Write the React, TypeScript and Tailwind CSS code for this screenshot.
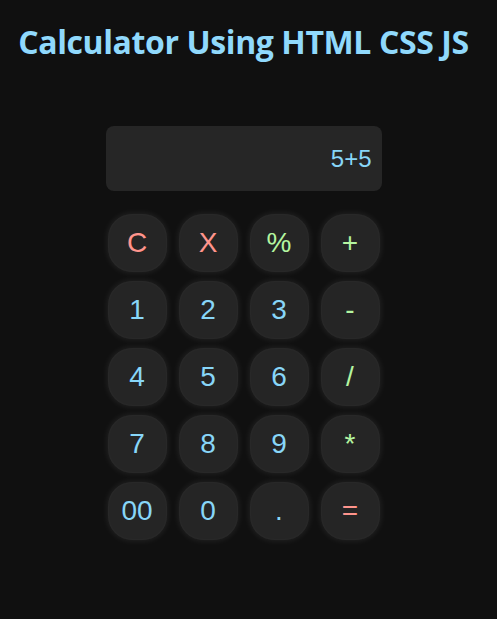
const keys = [
  { label: 'C', tone: 'text-[#ff948c]' },
  { label: 'X', tone: 'text-[#ff948c]' },
  { label: '%', tone: 'text-[#b4f5a0]' },
  { label: '+', tone: 'text-[#b4f5a0]' },
  { label: '1', tone: 'text-[#88d6f8]' },
  { label: '2', tone: 'text-[#88d6f8]' },
  { label: '3', tone: 'text-[#88d6f8]' },
  { label: '-', tone: 'text-[#b4f5a0]' },
  { label: '4', tone: 'text-[#88d6f8]' },
  { label: '5', tone: 'text-[#88d6f8]' },
  { label: '6', tone: 'text-[#88d6f8]' },
  { label: '/', tone: 'text-[#b4f5a0]' },
  { label: '7', tone: 'text-[#88d6f8]' },
  { label: '8', tone: 'text-[#88d6f8]' },
  { label: '9', tone: 'text-[#88d6f8]' },
  { label: '*', tone: 'text-[#b4f5a0]' },
  { label: '00', tone: 'text-[#88d6f8]' },
  { label: '0', tone: 'text-[#88d6f8]' },
  { label: '.', tone: 'text-[#88d6f8]' },
  { label: '=', tone: 'text-[#ff948c]' },
] as const

export default function App() {
  return (
    <div className="flex h-[619px] w-full flex-col items-center bg-[#101010] pr-[10px] font-['Liberation_Sans',Arial,sans-serif]">
      <h1 className="mt-[20px] font-['Open_Sans',sans-serif] text-[32px] font-bold leading-[44px] tracking-[-0.4px] text-[#90d9fc]">
        Calculator Using HTML CSS JS
      </h1>

      <div className="mt-[62px] flex h-[65px] w-[276px] items-center justify-end rounded-[8px] bg-[#262626] pr-[10px] text-[24px] text-[#88d6f8]">
        5+5
      </div>

      <div className="mt-[23px] grid grid-cols-4 gap-x-[12px] gap-y-[9px]">
        {keys.map((k) => (
          <button
            key={k.label}
            className={`flex h-[58px] w-[59px] items-center justify-center rounded-[24px] bg-[#252525] text-[28px] shadow-[0_0_6px_1px_rgba(255,255,255,0.08),inset_0_0_3px_rgba(255,255,255,0.05)] ${k.tone}`}
          >
            {k.label}
          </button>
        ))}
      </div>
    </div>
  )
}
